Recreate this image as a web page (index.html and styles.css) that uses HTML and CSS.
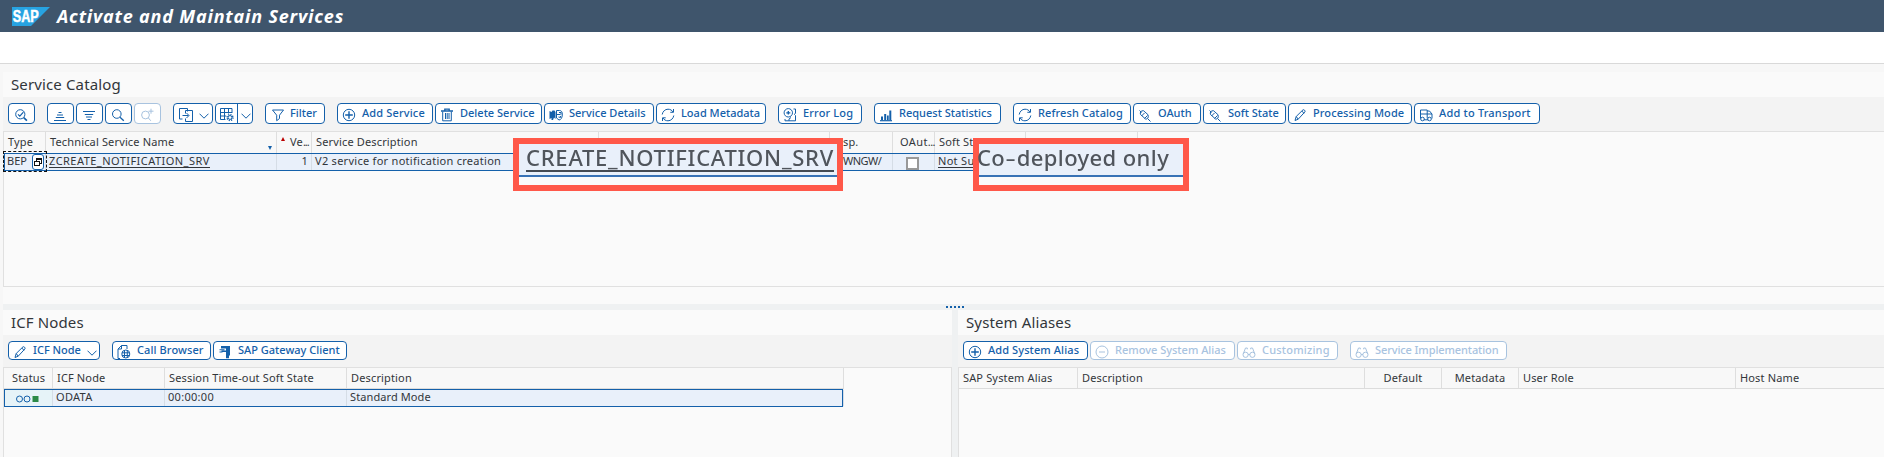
FILE: index.html
```
<!DOCTYPE html>
<html lang="en">
<head>
<meta charset="utf-8">
<title>Activate and Maintain Services</title>
<link rel="stylesheet" href="styles.css">
</head>
<body>
<svg class="defs" width="0" height="0">
  <symbol id="plus" viewBox="0 0 14 14"><circle cx="7" cy="7" r="5.7"/><path d="M7 3.2v7.6M3.2 7h7.6" stroke-width="1.4"/></symbol>
  <symbol id="minus" viewBox="0 0 14 14"><circle cx="7" cy="7" r="6"/><path d="M4 7h6"/></symbol>
  <symbol id="search" viewBox="0 0 14 14"><circle cx="5.8" cy="6" r="4.3"/><path d="M9 9.2l3.8 3.6" stroke-width="1.3"/></symbol>
  <symbol id="zoomcheck" viewBox="0 0 14 14"><circle cx="6.3" cy="6.3" r="4.6"/><path d="M9.7 9.7l3.2 3" stroke-width="1.7"/><path d="M4 6.3l1.8 1.8 3.6-4" stroke-width="1.2"/></symbol>
  <symbol id="searchplus" viewBox="0 0 14 14"><circle cx="5.5" cy="7" r="3.9"/><path d="M8.3 9.8l2.5 3M8.5 3.2h5M11 .7v5"/></symbol>
  <symbol id="asc" viewBox="0 0 14 14"><path d="M5.500 4.500h3M4 7h6M2.800 9.500h8.400M1 12.500h12"/></symbol>
  <symbol id="desc" viewBox="0 0 14 14"><path d="M1 3.500h12M2.800 6.500h8.400M4 9h6M5.500 11.500h3"/></symbol>
  <symbol id="export" viewBox="0 0 14 14"><path d="M8.500 3.500V.5H.5v10.500h3M6.500 2.500h7v11h-7v-3M6.500 5.500V2.500M3.500 7.500h6M7.500 5L10 7.500 7.500 10"/></symbol>
  <symbol id="grid" viewBox="0 0 14 14"><path d="M.5.5h11.500v4.500M.5.5v11h5M.5 4.500h11.500M.5 8h5.500M4.500.5v11M8.500.5v5"/><circle cx="10" cy="9.500" r="2.900" stroke-width="1.500" stroke-dasharray="1.200 1.080"/><circle cx="10" cy="9.500" r="1.900"/></symbol>
  <symbol id="filter" viewBox="0 0 14 14"><path d="M1.500 2h11L8.500 7.200v3.300L5.700 12.700V7.200z"/></symbol>
  <symbol id="trash" viewBox="0 0 14 14"><path d="M1 3h12M4.800 3V1.200h4.400V3" stroke-width="1.300"/><path d="M2.700 3.500v9.300h8.600V3.500M5.500 5v6M7.200 5v6M9 5v6"/></symbol>
  <symbol id="details" viewBox="0 0 14 14"><path class="solid" d="M.5 3l2 1 1-1.500h2l1 1.500V11L5 9.500 4 12H2.500V10L.5 11z"/><path d="M7.500 2.500h3c2 0 3 1.500 2.800 4.500-.2 3-1.500 5-3.300 5L7.500 10zM8 6.500h3.500M10 4.500h2v2M9.500 9l2 .5V8"/></symbol>
  <symbol id="refresh" viewBox="0 0 14 14"><path d="M1.200 6.500C1.700 3.500 4 1.200 7 1.200c2.200 0 4 1 5 2.800M12.800 7.500c-.5 3-2.800 5.300-5.800 5.300-2.200 0-4-1-5-2.800M12.500 1v3.300H9.300M1.500 13V9.800h3.200"/></symbol>
  <symbol id="log" viewBox="0 0 14 14"><circle cx="5.300" cy="4.800" r="4.200"/><path d="M3.300 4.800h4M5.300 3v3.500" stroke-width="1.300"/><path d="M10.500 1h2v4l-1 1.500 1 1v5.300H2V11M6 12.800V11l2-1.500"/></symbol>
  <symbol id="chart" viewBox="0 0 14 14"><path d="M1 12.700h12" stroke-width="1.200"/><path class="solid" d="M2 8.500h2V12H2zM5.200 6h2v6h-2zM8 7.500h1.700V12H8zM10.300 2.500h2V12h-2z"/></symbol>
  <symbol id="plug" viewBox="0 0 14 14"><path d="M1.500 2.500l2 2M10 11l2.500 2.500M2.500 6.500c-.8-2 .5-4 3-3.800l4.500 4M2.500 6.500l5 4.500c2 .5 3.500-1.500 2.500-4.300M3.500 8l3-3M6.500 10.500l3-3"/></symbol>
  <symbol id="pencil" viewBox="0 0 14 14"><path d="M2 12.500l1.200-4L10 1.800c.8-.5 2.500.8 2 2L5.200 11.200zM3.200 8.500l2 2.700M8.800 3l2.200 2.300"/></symbol>
  <symbol id="truck" viewBox="0 0 14 14"><path d="M1.500 10.500V2h6.700v8.500M1 6h12v4.500M8.200 3h2.300L13 6M5 11.800h4"/><circle cx="3.500" cy="11" r="1.800"/><circle cx="10.500" cy="11" r="1.800"/></symbol>
  <symbol id="browser" viewBox="0 0 14 14"><path d="M10 4V.5H4.500L1 4v9.500h2M4.500.5V4H1"/><circle cx="8.800" cy="9" r="4"/><path d="M4.800 7.800h8M4.800 10.500h8M7.500 5.200v7.600M10.300 5.200v7.600"/></symbol>
  <symbol id="gateway" viewBox="0 0 14 14"><path class="solid" d="M3 1h9v9.500h-1v2.800H8V7H3.500V5.500H8V3.500H3zM1.500 4.300h5v1h-5zM1.500 6.500h3v1h-3z"/></symbol>
  <symbol id="glasses" viewBox="0 0 14 14"><circle cx="3.600" cy="9.800" r="2.600"/><circle cx="10.400" cy="9.800" r="2.600"/><path d="M1.200 9L3.500 3h1.800v1.300M12.800 9L10.500 3H8.700v1.300M6 9.500h2"/></symbol>
  <symbol id="chev" viewBox="0 0 10 6"><path d="M.5.7L5 5.200 9.500.7"/></symbol>
</svg>

<header class="shell">
  <svg class="logo" viewBox="0 0 38 19"><path class="logo-bg" d="M0 0h38L19 19H0z"/><text x="0.800" y="14.500" textLength="26" lengthAdjust="spacingAndGlyphs">SAP</text></svg>
  <h1>Activate and Maintain Services</h1>
</header>
<div class="commandbar"></div>

<main class="workspace">
  <section class="catalog">
    <h2>Service Catalog</h2>
    <div class="toolbar">
      <button class="btn sq"><svg><use href="#zoomcheck"/></svg></button>
      <button class="btn sq gap"><svg><use href="#asc"/></svg></button>
      <button class="btn sq"><svg><use href="#desc"/></svg></button>
      <button class="btn sq"><svg><use href="#search"/></svg></button>
      <button class="btn sq off"><svg><use href="#searchplus"/></svg></button>
      <button class="btn menu gap"><svg><use href="#export"/></svg><svg class="chev"><use href="#chev"/></svg></button>
      <button class="btn split"><svg><use href="#grid"/></svg><i></i><svg class="chev"><use href="#chev"/></svg></button>
      <button class="btn b-filter gap"><svg><use href="#filter"/></svg><span>Filter</span></button>
      <button class="btn b-add gap"><svg><use href="#plus"/></svg><span>Add Service</span></button>
      <button class="btn b-delete"><svg><use href="#trash"/></svg><span>Delete Service</span></button>
      <button class="btn b-details"><svg><use href="#details"/></svg><span>Service Details</span></button>
      <button class="btn b-load"><svg><use href="#refresh"/></svg><span>Load Metadata</span></button>
      <button class="btn b-error gap"><svg><use href="#log"/></svg><span>Error Log</span></button>
      <button class="btn b-stats gap"><svg><use href="#chart"/></svg><span>Request Statistics</span></button>
      <button class="btn b-refresh gap"><svg><use href="#refresh"/></svg><span>Refresh Catalog</span></button>
      <button class="btn b-oauth"><svg><use href="#plug"/></svg><span>OAuth</span></button>
      <button class="btn b-soft"><svg><use href="#plug"/></svg><span>Soft State</span></button>
      <button class="btn b-mode"><svg><use href="#pencil"/></svg><span>Processing Mode</span></button>
      <button class="btn b-transport"><svg><use href="#truck"/></svg><span>Add to Transport</span></button>
    </div>
    <div class="table">
      <div class="row head cols-catalog">
        <div>Type</div>
        <div class="wide">Technical Service Name<svg class="sort" viewBox="0 0 4 4"><path d="M0 0h4L2 4z"/></svg></div>
        <div class="ver"><svg class="key" viewBox="0 0 4 4"><path d="M0 4h4L2 0z"/></svg>Ve<small>...</small></div>
        <div>Service Description</div>
        <div></div>
        <div class="disp">sp.</div>
        <div class="oaut">OAut<small>...</small></div>
        <div>Soft St</div>
        <div></div>
      </div>
      <div class="row selected cols-catalog">
        <div class="type">BEP<span class="focus"></span><svg class="f4" viewBox="0 0 12 16"><rect class="f4-box" x=".5" y=".5" width="11" height="15" rx="2.500"/><path class="f4-mark" d="M4.500 7V4.500h5v5H7.500M4.500 5h5M2.500 7.500h5v4h-5z"/></svg></div>
        <div class="name"><u>ZCREATE_NOTIFICATION_SRV</u></div>
        <div class="num">1</div>
        <div class="desc">V2 service for notification creation</div>
        <div></div>
        <div class="pkg">WNGW/</div>
        <div class="check"><span></span></div>
        <div class="softval"><u>Not Su</u></div>
        <div></div>
      </div>
      <div class="callout service"><div><span>CREATE_NOTIFICATION_SRV</span></div></div>
      <div class="callout deploy"><div><span>Co<b>-</b>deployed only</span></div></div>
    </div>
  </section>

  <div class="splitter"><span></span><span></span><span></span><span></span><span></span></div>

  <div class="lower">
    <section class="nodes">
      <h2>ICF Nodes</h2>
      <div class="toolbar low">
        <button class="btn b-icf"><svg><use href="#pencil"/></svg><span>ICF Node</span><svg class="chev"><use href="#chev"/></svg></button>
        <button class="btn b-call gap"><svg><use href="#browser"/></svg><span>Call Browser</span></button>
        <button class="btn b-gateway"><svg><use href="#gateway"/></svg><span>SAP Gateway Client</span></button>
      </div>
      <div class="table">
        <div class="row head cols-nodes">
          <div class="status">Status</div><div>ICF Node</div><div class="session">Session Time-out Soft State</div><div>Description</div>
        </div>
        <div class="row selected cols-nodes">
          <div class="lights"><svg viewBox="0 0 24 8"><circle cx="3.500" cy="4" r="3"/><circle cx="11" cy="4" r="3"/><path d="M16.500 1h6v6h-6z"/></svg></div>
          <div>ODATA</div><div class="time">00:00:00</div><div class="mode">Standard Mode</div>
        </div>
      </div>
    </section>
    <section class="aliases">
      <h2>System Aliases</h2>
      <div class="toolbar low">
        <button class="btn b-alias"><svg><use href="#plus"/></svg><span>Add System Alias</span></button>
        <button class="btn b-remove off"><svg><use href="#minus"/></svg><span>Remove System Alias</span></button>
        <button class="btn b-custom off"><svg><use href="#glasses"/></svg><span>Customizing</span></button>
        <button class="btn b-impl gap off"><svg><use href="#glasses"/></svg><span>Service Implementation</span></button>
      </div>
      <div class="table">
        <div class="row head cols-aliases">
          <div>SAP System Alias</div><div>Description</div><div class="mid">Default</div><div class="mid">Metadata</div><div>User Role</div><div>Host Name</div>
        </div>
      </div>
    </section>
  </div>
</main>
</body>
</html>
```
FILE: styles.css
```
* { box-sizing: border-box; }
body {
  margin: 0;
  width: 1884px;
  height: 457px;
  overflow: hidden;
  display: flex;
  flex-direction: column;
  background: #f7f7f7;
  color: #32363a;
  font: 11px/16px "Noto Sans", sans-serif;
  letter-spacing: .3px;
  white-space: nowrap;
}
.defs { position: absolute; }
svg { fill: none; stroke: currentColor; flex: none; }
.solid { fill: currentColor; stroke: none; }

.shell {
  height: 32px;
  flex: none;
  display: flex;
  align-items: center;
  padding-left: 12px;
  gap: 7px;
  background: #3f556c;
  color: #fff;
}
.logo { width: 38px; height: 19px; margin-top: 1px; stroke: none; }
.logo-bg { fill: #27a3e2; }
.logo text { fill: #fff; stroke: #fff; stroke-width: .5; font: bold 16px "Liberation Sans", sans-serif; letter-spacing: 0; }
h1 { margin: 0; font: italic bold 18px/32px "Noto Sans", sans-serif; letter-spacing: .82px; }
.commandbar { height: 32px; flex: none; background: #fff; border-bottom: 1px solid #d9d9d9; }

.workspace { flex: 1; display: flex; flex-direction: column; padding: 8px 0 0 3px; }
.catalog { height: 232px; flex: none; display: flex; flex-direction: column; padding-bottom: 17px; background: #fafafa; }
h2 { margin: 0; height: 25px; flex: none; padding-left: 8px; font: 15px/25px "Noto Sans", sans-serif; letter-spacing: .13px; background: #fafafa; }

.toolbar { height: 34px; flex: none; display: flex; gap: 2px; padding: 6px 0 0 5px; background: #f3f3f3; }
.toolbar.low { height: 32px; }
.btn {
  height: 21px;
  display: flex;
  align-items: center;
  padding: 0 0 0 4px;
  gap: 6px;
  border: 1px solid #1460aa;
  border-radius: 4px;
  background: #fff;
  color: #1460aa;
  font: 500 11px/18px "Noto Sans", sans-serif;
  letter-spacing: 0;
}
.low .btn { height: 19px; }
.btn span { margin-top: -2px; }
.btn svg { width: 14px; height: 14px; margin-top: 2px; }
.btn .chev { width: 10px; height: 6px; margin-top: 5px; }
.btn.gap { margin-left: 10px; }
.btn.off { color: #a8c3df; border-color: #a8c3df; }
.sq { width: 27px; padding-left: 5px; }
.menu { width: 40px; padding-left: 5px; }
.split { width: 38px; padding-left: 4px; gap: 3px; }
.split i { width: 1px; height: 19px; background: #1460aa; }
.b-filter { width: 60px; padding-left: 5px; gap: 5px; }
.b-add { width: 96px; gap: 6px; letter-spacing: .15px; }
.b-delete { width: 107px; }
.b-details { width: 110px; }
.b-load { width: 110px; }
.b-error { width: 84px; letter-spacing: .15px; }
.b-stats { width: 127px; }
.b-refresh { width: 118px; letter-spacing: .1px; }
.b-oauth { width: 68px; }
.b-soft { width: 83px; }
.b-mode { width: 124px; letter-spacing: .1px; }
.b-transport { width: 126px; letter-spacing: .2px; }
.b-icf { width: 92px; }
.b-call { width: 99px; letter-spacing: .1px; }
.b-gateway { width: 134px; letter-spacing: 0; }
.b-alias { width: 125px; letter-spacing: .1px; }
.b-remove { width: 145px; }
.b-custom { width: 101px; letter-spacing: .2px; }
.b-impl { width: 157px; letter-spacing: -.1px; }

.table { position: relative; flex: 1; border: 1px solid #e0e0e0; border-width: 1px 0 1px 1px; background: #fafafa; }
.row { display: grid; }
.row > div { border-right: 1px solid #dedede; padding-left: 4px; }
.head { height: 21px; line-height: 20px; background: #f8f8f8; letter-spacing: .15px; }
.selected { position: relative; height: 18px; line-height: 14px; background: #e9f0fa; }
.selected::after { content: ""; position: absolute; inset: 0; border: 1px solid #1460aa; }
.nodes .selected::after { right: 1px; }
.selected > div { margin: 1px 0; border-color: #d5dde6; padding-left: 3px; }
.cols-catalog { width: 1134px; grid-template-columns: 42px 231px 35px 287px 231px 63px 42px 91px 112px; }
.cols-nodes { width: 840px; grid-template-columns: 49px 112px 182px 497px; }
.cols-aliases { grid-template-columns: 119px 287px 77px 77px 217px 1fr; }
.low + .table .head { border-bottom: 1px solid #dcdcdc; }
.cols-aliases .mid { text-align: center; padding: 0; }
.cols-aliases > div:last-child { border-right: 0; }

.wide { display: flex; justify-content: space-between; }
.sort { width: 4px; height: 4px; margin: 14px 4px 0 0; fill: #1460aa; stroke: none; }
.row > .ver { display: flex; padding-left: 4px; }
.key { width: 4px; height: 4px; margin: 5px 5px 0 0; fill: #bb0000; stroke: none; }
small { font-size: 11px; letter-spacing: -1px; }
.row > .disp { padding-left: 13px; }
.row > .oaut { padding-left: 7px; letter-spacing: .4px; }
.oaut small { letter-spacing: -.6px; }
.type { position: relative; letter-spacing: 0; }
.focus { position: absolute; z-index: 1; left: -1px; top: -3px; width: 44px; height: 21px; border: 1px dashed #111; }
.f4 { position: absolute; left: 28px; top: 0; width: 12px; height: 16px; stroke: #111; }
.f4-box { fill: #fff; stroke: #1460aa; }
.f4-mark { fill: #fff; shape-rendering: crispEdges; }
.name { letter-spacing: .46px; }
.desc { letter-spacing: .28px; }
.num { text-align: right; padding-right: 3px; }
.mode { letter-spacing: .1px; }
.selected > .pkg { padding-left: 13px; letter-spacing: -.5px; }
.check { display: flex; align-items: center; justify-content: center; }
.check span { width: 13px; height: 13px; margin: 2px 0 0 -5px; border: 2px solid #999; background: #fff; }
u { text-decoration: none; display: inline-block; height: 14px; border-bottom: 1px solid #32363a; }

.callout { position: absolute; top: 6px; height: 53px; border: 6px solid #ff5849; background: #fafafa; color: #50555c; }
.callout div { height: 33px; background: #e9f0fa; border-bottom: 2px solid #3872b5; font-size: 22px; font-weight: 500; line-height: 26px; }
.callout span { display: inline-block; filter: blur(.6px); }
.service { left: 509px; width: 330px; }
.service span { height: 28px; margin-left: 7px; border-bottom: 2px solid #444a52; letter-spacing: .75px; }
.deploy { left: 969px; width: 216px; }
.deploy span { margin-left: -2px; letter-spacing: .4px; }
.deploy b { display: inline-block; font-weight: 400; transform: scaleX(1.5); margin: 0 2px; }

.splitter { height: 6px; flex: none; display: flex; gap: 2px; padding: 2px 0 0 943px; background: #eff1f2; }
.splitter span { width: 2px; height: 2px; background: #1460aa; }
.lower { flex: 1; display: grid; grid-template-columns: 949px 1fr; gap: 6px; background: #eff1f2; }
.lower section { display: flex; flex-direction: column; }
.lower .table { border-bottom: 0; }
.nodes .table { border-right: 1px solid #e0e0e0; }
.row > .status { padding-left: 8px; }
.lights { display: flex; align-items: center; background: #e6f3f8; }
.lights svg { width: 24px; height: 8px; margin: 2px 0 0 9px; stroke: #1460aa; }
.lights path { fill: #2b8a47; stroke: none; }
```
